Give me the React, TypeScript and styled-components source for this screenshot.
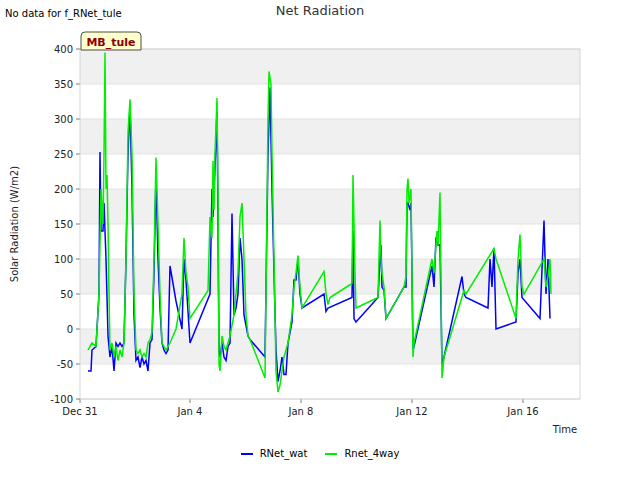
import React from 'react';
import styled, { createGlobalStyle } from 'styled-components';

const Global = createGlobalStyle`
  html, body { margin: 0; padding: 0; background: #fff; }
  body { font-family: "DejaVu Sans", sans-serif; }
`;

const Page = styled.div`
  width: 640px;
  height: 480px;
  display: flex;
  flex-direction: column;
  background: #fff;
`;

const Header = styled.div`
  height: 20px;
  display: grid;
  grid-template-columns: 1fr auto 1fr;
  align-items: start;
`;

const Note = styled.div`
  font-size: 10px;
  color: #000;
  padding: 8px 0 0 5px;
`;

const Title = styled.div`
  font-size: 13px;
  color: #333;
  padding-top: 3px;
`;

const Chart = styled.svg`
  display: block;
  width: 640px;
  height: 428px;
`;

const Legend = styled.div`
  flex: 1;
  display: flex;
  justify-content: center;
  align-items: flex-start;
  gap: 18px;
  font-size: 10px;
  color: #000;
`;

const LegendItem = styled.div`
  display: flex;
  align-items: center;
  gap: 7px;
`;

const Swatch = styled.span<{ $color: string }>`
  width: 12px;
  height: 2px;
  background: ${(p) => p.$color};
`;

const X0 = 80, X1 = 580, Y0 = 49, Y1 = 399;
const vy = (v: number) => Y0 + (400 - v) * 0.7;

const green: [number, number][] = [
  [88,-30],[92,-20],[96,-25],[99,50],[101,200],[103,150],[104,250],[105,395],[106,200],[107,220],[108,150],[109,50],[110,-30],[112,-20],[114,-40],[116,-25],[118,-45],[120,-30],[122,-40],[124,-20],[126,100],[128,280],[130,328],[132,250],[134,50],[136,-30],[138,-35],[140,-30],[142,-40],[144,-35],[146,-40],[148,-20],[150,-15],[152,-5],[154,100],[156,245],[158,150],[160,50],[162,-20],[164,-25],[166,-30],[168,-25],[170,-20],[176,0],[182,50],[184,130],[186,80],[188,60],[190,15],[208,55],[210,160],[212,130],[213,240],[214,170],[215,250],[217,330],[218,200],[219,-50],[220,-60],[222,-10],[224,-25],[226,-30],[228,-20],[230,-10],[234,20],[238,80],[240,160],[242,180],[244,100],[246,20],[248,-10],[250,-15],[265,-70],[268,300],[269,368],[271,350],[272,250],[274,100],[276,-60],[278,-90],[280,-80],[284,-40],[288,-20],[292,20],[294,60],[296,80],[298,105],[300,60],[302,30],[324,82],[326,50],[328,35],[330,45],[352,65],[353,220],[354,150],[355,80],[356,30],[378,45],[380,155],[381,100],[382,80],[384,60],[386,15],[404,60],[406,75],[407,200],[408,215],[409,180],[410,190],[411,200],[413,-40],[414,-20],[432,100],[434,80],[436,120],[437,140],[438,120],[440,195],[442,-70],[444,-40],[464,55],[466,50],[494,115],[496,100],[516,15],[518,100],[520,135],[522,60],[524,50],[544,100],[546,60],[548,75],[550,100],[551,50],
];

const blue: [number, number][] = [
  [88,-60],[91,-60],[92,-30],[96,-25],[99,50],[100,253],[101,140],[103,140],[104,180],[106,100],[108,-10],[110,-40],[112,-25],[114,-60],[116,-20],[118,-25],[120,-20],[122,-25],[124,-20],[126,100],[128,250],[130,320],[132,200],[134,20],[136,-45],[138,-40],[140,-55],[142,-40],[144,-50],[146,-45],[148,-60],[150,-20],[152,-15],[154,80],[156,220],[158,100],[160,30],[162,-20],[164,-30],[166,-35],[168,-30],[170,90],[176,40],[182,0],[184,100],[186,70],[190,-20],[210,50],[212,200],[213,160],[215,230],[217,310],[218,150],[219,-30],[220,-40],[222,-20],[224,-40],[226,-45],[228,-25],[230,-20],[232,165],[234,20],[236,30],[238,50],[240,130],[242,100],[244,20],[246,5],[248,-10],[250,-15],[265,-40],[268,250],[270,345],[272,200],[274,80],[276,-30],[278,-75],[280,-60],[282,-40],[284,-65],[286,-65],[288,-20],[292,10],[294,70],[296,70],[298,100],[300,50],[302,30],[324,50],[326,25],[328,30],[352,45],[353,140],[354,15],[356,10],[378,45],[380,100],[381,120],[382,60],[384,55],[386,15],[404,60],[406,60],[407,180],[408,180],[409,175],[410,170],[411,180],[413,-30],[414,-25],[432,90],[434,60],[436,130],[437,130],[438,120],[440,120],[442,-50],[444,-40],[462,75],[464,50],[466,45],[488,30],[490,100],[492,60],[494,115],[496,0],[516,10],[518,80],[520,100],[522,45],[540,15],[544,155],[546,50],[548,100],[550,15],
];

const pts = (d: [number, number][]) => d.map(([x, v]) => `${x},${vy(v).toFixed(1)}`).join(' ');

const yTicks = [400, 350, 300, 250, 200, 150, 100, 50, 0, -50, -100];
const xTicks: [number, string][] = [[80, 'Dec 31'], [190, 'Jan 4'], [301, 'Jan 8'], [412, 'Jan 12'], [523, 'Jan 16']];

export default function App() {
  return (
    <Page>
      <Global />
      <Header>
        <Note>No data for f_RNet_tule</Note>
        <Title>Net Radiation</Title>
        <div />
      </Header>
      <Chart viewBox="0 20 640 428">
        <rect x={X0} y={Y0} width={X1 - X0} height={Y1 - Y0} fill="#fff" />
        {yTicks.slice(0, -1).map((v, i) =>
          i % 2 === 0 ? <rect key={v} x={X0} y={vy(v)} width={X1 - X0} height={35} fill="#f0f0f0" /> : null
        )}
        {yTicks.map((v) => (
          <g key={v}>
            <line x1={X0} x2={X1} y1={vy(v)} y2={vy(v)} stroke="#dcdcdc" strokeWidth={0.8} />
            <line x1={X0 - 4} x2={X0} y1={vy(v)} y2={vy(v)} stroke="#555" strokeWidth={0.8} />
            <text x={X0 - 7} y={vy(v) + 3.5} fontSize={10} textAnchor="end" fill="#222">{v}</text>
          </g>
        ))}
        {xTicks.map(([x, l]) => (
          <g key={l}>
            <line x1={x} x2={x} y1={Y1} y2={Y1 + 4} stroke="#555" strokeWidth={0.8} />
            <text x={x} y={Y1 + 16} fontSize={10} textAnchor="middle" fill="#222">{l}</text>
          </g>
        ))}
        <rect x={X0} y={Y0} width={X1 - X0} height={Y1 - Y0} fill="none" stroke="#ccc" strokeWidth={0.8} />
        <polyline points={pts(blue)} fill="none" stroke="#0000ff" strokeWidth={1.5} />
        <polyline points={pts(green)} fill="none" stroke="#00ee00" strokeWidth={1.5} />
        <text x={565} y={433} fontSize={10} textAnchor="middle" fill="#222">Time</text>
        <text transform="translate(18,224) rotate(-90)" fontSize={10} textAnchor="middle" fill="#222">Solar Radiation (W/m2)</text>
        <path d="M81,50 L81,36 Q81,32 85,32 L137,32 Q141,32 141,36 L141,50 Z" fill="#ffffcc" stroke="#222" strokeWidth={0.8} />
        <text x={111} y={46} fontSize={11} fontWeight="bold" textAnchor="middle" fill="#8b0000">MB_tule</text>
      </Chart>
      <Legend>
        <LegendItem><Swatch $color="#0000ff" />RNet_wat</LegendItem>
        <LegendItem><Swatch $color="#00ee00" />Rnet_4way</LegendItem>
      </Legend>
    </Page>
  );
}
